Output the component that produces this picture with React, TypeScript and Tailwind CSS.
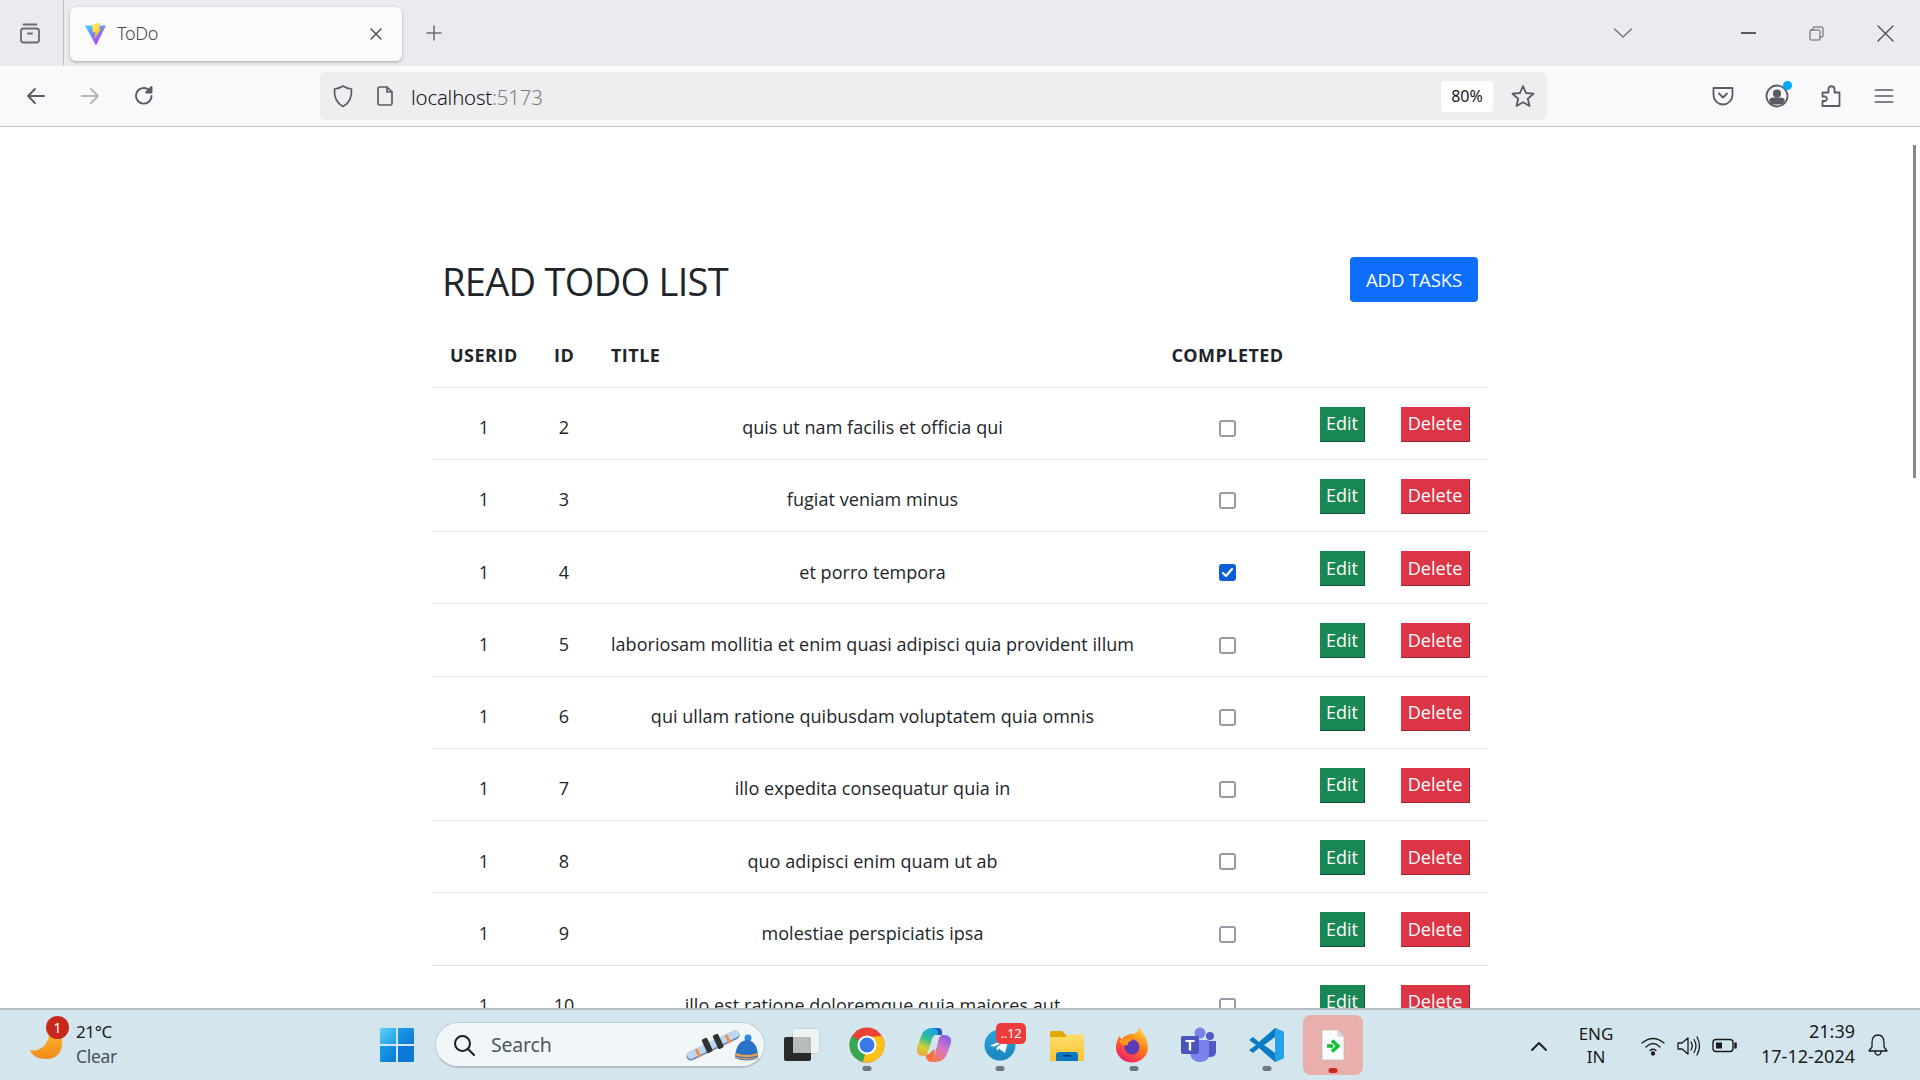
import React from "react";

const rows: [number, string, boolean][] = [
  [2, "quis ut nam facilis et officia qui", false],
  [3, "fugiat veniam minus", false],
  [4, "et porro tempora", true],
  [5, "laboriosam mollitia et enim quasi adipisci quia provident illum", false],
  [6, "qui ullam ratione quibusdam voluptatem quia omnis", false],
  [7, "illo expedita consequatur quia in", false],
  [8, "quo adipisci enim quam ut ab", false],
  [9, "molestiae perspiciatis ipsa", false],
  [10, "illo est ratione doloremque quia maiores aut", false],
];

const S = ({ children, w = 20, h = 20, vb = "0 0 20 20", c = "#5b5b66", sw = 1.7, className = "" }: any) => (
  <svg width={w} height={h} viewBox={vb} fill="none" stroke={c} strokeWidth={sw} strokeLinecap="round" strokeLinejoin="round" className={className}>
    {children}
  </svg>
);

const Vite = () => (
  <svg width="22" height="24" viewBox="0 0 22 24">
    <defs>
      <linearGradient id="v1" x1="0" y1="0" x2="0.7" y2="1"><stop offset="0" stopColor="#41d1ff" /><stop offset="1" stopColor="#bd34fe" /></linearGradient>
      <linearGradient id="v2" x1="0" y1="0" x2="0.4" y2="1"><stop offset="0" stopColor="#ffea83" /><stop offset="0.6" stopColor="#ffdd35" /><stop offset="1" stopColor="#ffa800" /></linearGradient>
    </defs>
    <path d="M0 3.5 L21 3.5 L11 23.5 Z" fill="url(#v1)" />
    <path d="M7 2.5 L15.5 0.5 L14 7 L16 6.7 L9.5 17 L10.5 10 L8 10.5 Z" fill="url(#v2)" />
  </svg>
);

const Win = () => (
  <svg width="36" height="36" viewBox="0 0 36 36">
    <defs>
      <linearGradient id="w1" x1="0" y1="0" x2="1" y2="1"><stop offset="0" stopColor="#5fd0f7" /><stop offset="1" stopColor="#1c9be6" /></linearGradient>
      <linearGradient id="w2" x1="0" y1="0" x2="1" y2="1"><stop offset="0" stopColor="#1c9ee8" /><stop offset="1" stopColor="#0a78d4" /></linearGradient>
    </defs>
    <path d="M1 2.5 Q1 1 2.5 1 H17 V17 H1 Z" fill="url(#w1)" />
    <path d="M19 1 H33.5 Q35 1 35 2.5 V17 H19 Z" fill="url(#w2)" />
    <path d="M1 19 H17 V35 H2.5 Q1 35 1 33.5 Z" fill="url(#w2)" />
    <path d="M19 19 H35 V33.5 Q35 35 33.5 35 H19 Z" fill="#0a78d4" />
  </svg>
);

const Chrome = () => (
  <svg width="36" height="36" viewBox="0 0 36 36">
    <circle cx="18" cy="18" r="17.5" fill="#ea4335" />
    <path d="M18 18 L3 9 A17.500 17.500 0 0 0 14 35 Z" fill="#34a853" />
    <path d="M18 18 L14 35 A17.500 17.500 0 0 0 33 9 L18 10 Z" fill="#fbc116" />
    <circle cx="18" cy="18" r="9.500" fill="#fff" />
    <circle cx="18" cy="18" r="7.500" fill="#3b78e7" />
  </svg>
);

const Copilot = () => (
  <svg width="36" height="36" viewBox="0 0 36 36">
    <defs>
      <linearGradient id="c1" x1="0.6" y1="0" x2="0.2" y2="1"><stop offset="0" stopColor="#14a3e8" /><stop offset="0.4" stopColor="#35c08e" /><stop offset="0.7" stopColor="#cdd23a" /><stop offset="1" stopColor="#f5a63e" /></linearGradient>
      <linearGradient id="c3" x1="0.7" y1="0" x2="0.3" y2="1"><stop offset="0" stopColor="#8a5fe0" /><stop offset="0.5" stopColor="#d876c8" /><stop offset="1" stopColor="#f5764a" /></linearGradient>
    </defs>
    <path d="M16 1 H22 Q26 1 25 5 L26 8 H20 Q17 8 16 12 L12 25 Q11 29 7 29 Q0 29 1 21 L4 12 Q7 1 16 1Z" fill="url(#c1)" />
    <path d="M18 1 H23 Q27 2 26 8 H21 Q24 4 18 1Z" fill="#2a55c8" />
    <path d="M26 8 H28 Q36 8 35 16 L32 24 Q29 35 20 35 H14 Q17 34 18 30 L22 15 Q23 9 26 8Z" fill="url(#c3)" />
    <path d="M10 28 Q14 27 16 24 L19 22 L18 30 Q17 34 14 35 Q9 32 10 28Z" fill="#f56f3a" />
  </svg>
);

const Telegram = () => (
  <svg width="32" height="32" viewBox="0 0 32 32">
    <defs><linearGradient id="tg" x1="0.5" y1="0" x2="0.5" y2="1"><stop offset="0" stopColor="#2aa5dd" /><stop offset="1" stopColor="#1a84bd" /></linearGradient></defs>
    <circle cx="16" cy="16" r="15.5" fill="url(#tg)" />
    <path d="M6 16.500 L25 9 L21 24 L15 19.500 L13 22 L12.500 18.500 L21 12 L10 17.800 Z" fill="#fff" />
  </svg>
);

const Folder = () => (
  <svg width="34" height="34" viewBox="0 0 34 34">
    <defs><linearGradient id="fo" x1="0" y1="0" x2="0" y2="1"><stop offset="0" stopColor="#ffdc6a" /><stop offset="1" stopColor="#fcc431" /></linearGradient></defs>
    <path d="M0 5 Q0 3 2 3 H12 L16 7 H34 V31 H0 Z" fill="#e0a800" />
    <path d="M0 9 H15 L18 6.500 H33 Q34 6.500 34 8 V33 H0 Z" fill="url(#fo)" />
    <path d="M6 33 V27 Q6 24 9 24 H25 Q28 24 28 27 V33 Z" fill="#0b78c4" />
    <rect x="13" y="27" width="8" height="1.500" fill="#063a70" />
  </svg>
);

const Firefox = () => (
  <svg width="34" height="36" viewBox="0 0 34 36">
    <defs>
      <linearGradient id="f1" x1="0.8" y1="0" x2="0.2" y2="1"><stop offset="0" stopColor="#ffdd3f" /><stop offset="0.45" stopColor="#ff7a1a" /><stop offset="1" stopColor="#f0146e" /></linearGradient>
    </defs>
    <path d="M24 0 C26 5 33 9 33 21 A16 15 0 1 1 1 20 C1 15 3 11 5 9 C5 11 6 12 7 12 C9 9 13 7 17 7 C21 7 24 4 24 0Z" fill="url(#f1)" />
    <circle cx="17" cy="20" r="7.500" fill="#5b3bb8" />
    <path d="M4 14 C9 10 15 11 18 13 C14 14 12 16 13 18 C8 19 6 17 4 14Z" fill="#ff9a1f" />
  </svg>
);

const Teams = () => (
  <svg width="36" height="36" viewBox="0 0 36 36">
    <circle cx="29" cy="9" r="4" fill="#5059c9" />
    <path d="M23 14 H35 V25 Q35 30 29 30 H23Z" fill="#5059c9" />
    <circle cx="19" cy="6" r="5.500" fill="#7b83eb" />
    <path d="M9 13 H28 V27 Q28 35 19 35 Q11 35 9 27Z" fill="#7b83eb" />
    <rect x="0" y="9" width="18" height="18" rx="2" fill="#4b53bc" />
    <path d="M4.500 13 H13.500 V15 H10.200 V23.500 H7.800 V15 H4.500Z" fill="#fff" />
  </svg>
);

const VSCode = () => (
  <svg width="36" height="36" viewBox="0 0 36 36">
    <path d="M26 1 L35 5 V31 L26 35 L10 21 L4 26 L0 23 L7 18 L0 13 L4 10 L10 15 Z M26 10 L15 18 L26 26 Z" fill="#0a7cc4" fillRule="evenodd" />
    <path d="M26 1 L35 5 V31 L26 35 Z" fill="#27a0ea" />
  </svg>
);

const FileApp = () => (
  <svg width="24" height="32" viewBox="0 0 24 32">
    <path d="M1 1 H17 L23 7 V31 H1Z" fill="#fbfbfb" stroke="#b9b9b9" strokeWidth="0.7" />
    <path d="M17 1 V7 H23Z" fill="#e0e0e0" stroke="#b9b9b9" strokeWidth="0.7" />
    <path d="M6 17 H12 M11 11.500 L17 17 L11 22.500" stroke="#10c030" strokeWidth="3.400" fill="none" />
  </svg>
);

const Sys = ({ text, className = "" }: { text: string; className?: string }) => (
  <span className={className}>{text}</span>
);

const Dot = () => <div className="absolute bottom-[3px] left-1/2 -translate-x-1/2 w-[9px] h-[5px] rounded-full bg-[#71787c]" />;

const TaskIcon = ({ children, dot }: any) => (
  <div className="relative w-[66.6px] h-[58px] flex items-center justify-center">
    {children}
    {dot && <Dot />}
  </div>
);

export default function App() {
  return (
    <div className="w-[1920px] h-[1080px] flex flex-col overflow-hidden bg-white text-[#212529] font-['Open_Sans','Noto_Sans',sans-serif]">
      {/* tab strip */}
      <div className="h-[66px] shrink-0 bg-[#ebebef] flex items-center relative">
        <div className="w-[64px] h-full border-r border-[#c4c4c9] flex items-center justify-center pr-[3px]">
          <S w={24} h={24} vb="0 0 24 24" c="#6b6b73" sw={1.8}>
            <rect x="3" y="7.500" width="18" height="14" rx="2.500" />
            <path d="M5.500 3.500 H18.500" />
            <path d="M10 12.500 H14" />
          </S>
        </div>
        <div className="ml-[6px] mt-[1px] w-[332px] h-[54px] rounded-[6px] bg-[#fbfbfc] shadow-[0_1px_3px_rgba(0,0,0,0.3)] flex items-center pl-[15px] pr-[19px]">
          <Vite />
          <span className="ml-[10px] text-[18px] text-[#45454d] font-['Noto_Sans',sans-serif] font-light tracking-[-0.3px]">ToDo</span>
          <div className="ml-auto">
            <S w={14} h={14} vb="0 0 14 14" c="#45454d" sw={1.4}><path d="M2 2 L12 12 M12 2 L2 12" /></S>
          </div>
        </div>
        <div className="ml-[23px]">
          <S w={18} h={18} vb="0 0 18 18" c="#6f6f78" sw={1.6}><path d="M9 2 V16 M2 9 H16" /></S>
        </div>
        <div className="ml-auto flex items-center">
          <S w={20} h={12} vb="0 0 20 12" c="#707078" sw={1.3} className="mr-[108px]"><path d="M1.500 2 L10 10 L18.500 2" /></S>
          <div className="w-[15px] h-[1.500px] bg-[#5a5a60] mr-[53px]" />
          <S w={15} h={15} vb="0 0 15 15" c="#5a5a60" sw={1} className="mr-[53px]"><rect x="1" y="4" width="10" height="10" rx="1" /><path d="M4 4 V2 Q4 1 5 1 H13 Q14 1 14 2 V10 Q14 11 13 11 H11" /></S>
          <S w={17} h={17} vb="0 0 17 17" c="#45454d" sw={1.2} className="mr-[26px]"><path d="M1 1 L16 16 M16 1 L1 16" /></S>
        </div>
      </div>

      {/* toolbar */}
      <div className="h-[61px] shrink-0 bg-[#f9f9fb] border-b-[1px] border-[#c6c6c9] flex items-center relative">
        <div className="w-[320px] flex items-center pl-[25px]">
          <S w={22} h={22} vb="0 0 22 22" c="#5b5b66" sw={1.9}><path d="M19 11 H3 M10 4 L3 11 L10 18" /></S>
          <S w={22} h={22} vb="0 0 22 22" c="#b4b4b9" sw={1.9} className="ml-[32px]"><path d="M3 11 H19 M12 4 L19 11 L12 18" /></S>
          <S w={22} h={22} vb="0 0 22 22" c="#5b5b66" sw={1.9} className="ml-[32px]"><path d="M18.500 11 A7.800 7.800 0 1 1 15 4.300" /><path d="M18.500 2 V7.500 H13 Z" fill="#5b5b66" /></S>
        </div>
        <div className="w-[1227px] h-[48px] rounded-[6px] bg-[#eeeef0] flex items-center">
          <S w={22} h={24} vb="0 0 22 24" c="#5b5b66" sw={1.7} className="ml-[12px]"><path d="M11 2 C8 4 5 5 2.500 5 C2 13 4 19 11 22.500 C18 19 20 13 19.500 5 C17 5 14 4 11 2Z" /></S>
          <S w={18} h={22} vb="0 0 18 22" c="#5b5b66" sw={1.7} className="ml-[22px]"><path d="M2 3.500 Q2 2 3.500 2 H11 L16 7 V18.500 Q16 20 14.500 20 H3.500 Q2 20 2 18.500 Z" /><path d="M11 2 V7 H16" /></S>
          <span className="ml-[17px] mt-[2px] text-[20.4px] tracking-[-0.2px] font-['Noto_Sans',sans-serif] font-light text-[#15141a]">localhost<span className="text-[#7b7b83]">:5173</span></span>
          <div className="ml-auto mr-[-1px] w-[52px] h-[31px] rounded-[4px] bg-white flex items-center justify-center text-[16px] font-['Noto_Sans',sans-serif] text-[#15141a]">80%</div>
          <S w={26} h={26} vb="0 0 26 26" c="#5b5b66" sw={1.8} className="ml-[18px] mr-[11px]"><path d="M13 3 L16 10 L23.500 10.700 L17.800 15.700 L19.500 23 L13 19.200 L6.500 23 L8.200 15.700 L2.500 10.700 L10 10Z" /></S>
        </div>
        <div className="ml-auto flex items-center pr-[26px]">
          <S w={24} h={22} vb="0 0 24 22" c="#5b5b66" sw={1.8}><path d="M2.500 3 H21.500 V10 A9.500 9.500 0 0 1 2.500 10Z" /><path d="M8 8.500 L12 12.500 L16 8.500" /></S>
          <div className="relative ml-[30px] w-[24px] h-[24px]">
            <S w={24} h={24} vb="0 0 24 24" c="#5b5b66" sw={1.8}><circle cx="12" cy="12" r="10.500" /><circle cx="12" cy="9.500" r="3.200" fill="#5b5b66" /><path d="M5 16 Q6 14.500 8 14.500 H16 Q18 14.500 19 16 L17 19.500 H7 Z" fill="#5b5b66" /></S>
            <div className="absolute -top-[3px] -right-[3px] w-[9px] h-[9px] rounded-full bg-[#00a8ff]" />
          </div>
          <S w={22} h={24} vb="0 0 22 24" c="#5b5b66" sw={1.8} className="ml-[31px]"><path d="M7.500 22 H19.500 V8.500 H14.500 V5.500 A3 3 0 0 0 8.500 5 V8.500 H2.500 V12.500 H5.500 A2.500 2.500 0 0 1 5.500 17 H2.500 V22 Z" /></S>
          <S w={20} h={18} vb="0 0 20 18" c="#5b5b66" sw={1.7} className="ml-[32px]"><path d="M1.500 3 H18.500 M1.500 9 H18.500 M1.500 15 H18.500" /></S>
        </div>
      </div>

      {/* page */}
      <div className="flex-1 min-h-0 relative overflow-hidden">
        <div className="w-[1056px] ml-[432px] pt-[131px]">
          <div className="h-[46px] pl-[10px] pr-[10px] flex items-start justify-between">
            <h1 className="text-[38px] leading-[46px] font-['Open_Sans',sans-serif] text-[#212529] tracking-[-0.7px]">READ TODO LIST</h1>
            <button className="-mt-[1px] w-[128px] h-[45px] rounded-[4px] bg-[#0d6efd] text-white text-[18.5px] tracking-[-0.1px]">ADD TASKS</button>
          </div>
          <table className="mt-[11px] w-[1056px] table-fixed border-collapse text-[18px] tracking-[0.05px]">
            <colgroup>
              <col className="w-[104px]" />
              <col className="w-[56px]" />
              <col className="w-[561px]" />
              <col className="w-[149px]" />
              <col className="w-[81px]" />
              <col className="w-[105px]" />
            </colgroup>
            <thead>
              <tr className="h-[72px] border-b border-[#dee2e6] font-bold text-left">
                <th className="pl-[18px] pt-[10px] tracking-[0.5px]">USERID</th>
                <th className="pl-[18px] pt-[10px] tracking-[0.45px]">ID</th>
                <th className="pl-[19px] pt-[10px] tracking-[0.45px]">TITLE</th>
                <th className="text-center pt-[10px] tracking-[0.45px]">COMPLETED</th>
                <th />
                <th />
              </tr>
            </thead>
            <tbody>
              {rows.map(([id, title, done]) => (
                <tr key={id} className="h-[72.25px] border-b border-[#dee2e6] text-center">
                  <td className="pt-[9px]">1</td>
                  <td className="pt-[9px]">{id}</td>
                  <td className="pt-[9px] whitespace-nowrap">{title}</td>
                  <td className="pt-[7px]">
                    <span className={`inline-flex align-middle items-center justify-center w-[17px] h-[17px] rounded-[3px] border-2 ${done ? "bg-[#0b5ed7] border-[#0b5ed7]" : "bg-white border-[#9a9aa5]"}`}>
                      {done && <S w={13} h={13} vb="0 0 13 13" c="#fff" sw={2.2}><path d="M2 7 L5 10 L11 3" /></S>}
                    </span>
                  </td>
                  <td className="pt-[8px]">
                    <button className="block mx-auto -mt-[6px] w-[45px] h-[35px] bg-[#198754] text-white border-r border-b border-[#0f5535] text-[18px]">Edit</button>
                  </td>
                  <td className="pt-[8px]">
                    <button className="block ml-[18px] -mt-[6px] w-[69px] h-[35px] bg-[#dc3545] text-white border-r border-b border-[#9c2230] text-[18px]">Delete</button>
                  </td>
                </tr>
              ))}
            </tbody>
          </table>
        </div>
        {/* scrollbar */}
        <div className="absolute right-[4px] top-[18px] w-[3px] h-[333px] bg-[#888888]" />
      </div>

      {/* taskbar */}
      <div className="h-[72px] shrink-0 bg-[#d3e6ed] border-t-[2px] border-[#b5bdc1] flex items-center relative text-[#1b1b1b] font-['Noto_Sans',sans-serif]">
        <div className="w-[130px] relative h-full">
          <svg width="36" height="32" viewBox="0 0 36 32" className="absolute left-[29px] top-[24px]">
            <defs><linearGradient id="moon" x1="0" y1="0" x2="0" y2="1"><stop offset="0" stopColor="#fbb02a" /><stop offset="1" stopColor="#f08a1a" /></linearGradient></defs>
            <path d="M1 16 C8 18 18 14 20 1 L32 1 C36 14 30 25 18 25 C9 25 3 22 1 16Z" fill="url(#moon)" />
          </svg>
          <div className="absolute left-[46px] top-[6px] w-[23px] h-[23px] rounded-full bg-[#c8281c] text-white text-[14px] leading-[23px] text-center">1</div>
          <div className="absolute left-[76px] top-[11px] text-[17px] leading-[22px] tracking-[-0.4px]">21°C</div>
          <div className="absolute left-[76px] top-[35px] text-[17.500px] leading-[22px] text-[#4d5356] tracking-[-0.3px]">Clear</div>
        </div>
        <div className="ml-[249px]"><Win /></div>
        <div className="ml-[20px] w-[330px] h-[46px] rounded-full bg-[#f1f6f9] border border-[#c0d0d7] border-b-[2px] border-b-[#b3c0c6] flex items-center relative">
          <S w={24} h={24} vb="0 0 24 24" c="#1d1d1d" sw={2} className="ml-[16px]"><circle cx="10.500" cy="10.500" r="7.500" /><path d="M16 16 L22 22" /></S>
          <span className="ml-[15px] text-[19.500px] text-[#50565a] tracking-[-0.2px]">Search</span>
          <svg width="78" height="34" viewBox="0 0 78 34" className="absolute right-[4px] top-[7px]">
            <line x1="9" y1="26" x2="53" y2="5" stroke="#5b7fa8" strokeWidth="9" strokeLinecap="round" />
            <line x1="9" y1="25" x2="53" y2="4" stroke="#bcd6f2" strokeWidth="8" strokeLinecap="round" />
            <line x1="14" y1="19" x2="18" y2="27" stroke="#ef8f4e" strokeWidth="3" />
            <line x1="44" y1="5" x2="48" y2="13" stroke="#ef8f4e" strokeWidth="3" />
            <rect x="22" y="8" width="6" height="15" rx="1.500" fill="#333" transform="rotate(-25 25 15)" />
            <rect x="33" y="4" width="6" height="15" rx="1.500" fill="#333" transform="rotate(-25 36 11)" />
            <circle cx="66" cy="8" r="3.500" fill="#2e8be0" />
            <path d="M53 28 Q54 10 66 10 Q76 12 76 28 Q65 33 53 28Z" fill="#2a72c8" />
            <path d="M53.500 23 Q65 27 75.500 23 L75.800 25.500 Q65 29 53.300 25.500Z" fill="#efa04e" />
            <path d="M53 27 Q65 31 76 27" stroke="#efa04e" strokeWidth="1.300" fill="none" />
          </svg>
        </div>
        <div className="ml-[19px] w-[35px] h-[32px] relative">
          <div className="absolute left-0 bottom-0 w-[27px] h-[24px] bg-[#2a2a2a] rounded-[2px]" />
          <div className="absolute right-0 top-0 w-[26px] h-[24px] rounded-[2px] bg-[#f2f4f4]/90 shadow-[0_0_2px_rgba(0,0,0,0.25)]" />
          <div className="absolute left-[9px] top-[8px] w-[18px] h-[16px] bg-[#b8bbbc]" />
        </div>
        <div className="ml-[15px] flex items-center">
          <TaskIcon dot><Chrome /></TaskIcon>
          <TaskIcon><Copilot /></TaskIcon>
          <TaskIcon dot>
            <Telegram />
            <div className="absolute left-[29px] top-[7px] w-[30px] h-[21px] rounded-[5px] bg-[#ee3b3b] text-white text-[13px] leading-[21px] text-center tracking-[-0.3px]">..12</div>
          </TaskIcon>
          <TaskIcon><Folder /></TaskIcon>
          <TaskIcon dot><div className="-ml-[3px]"><Firefox /></div></TaskIcon>
          <TaskIcon><div className="-ml-[2px]"><Teams /></div></TaskIcon>
          <TaskIcon dot><VSCode /></TaskIcon>
          <div className="relative w-[60px] h-[60px] rounded-[8px] bg-[#e8afac] ml-[3px] flex items-center justify-center">
            <FileApp />
            <div className="absolute bottom-[2px] left-1/2 -translate-x-1/2 w-[9px] h-[5px] rounded-full bg-[#c8281c]" />
          </div>
        </div>
        <div className="absolute left-[1530px] top-0 h-full w-[390px]">
          <S w={18} h={12} vb="0 0 18 12" c="#1b1b1b" sw={1.800} className="absolute left-[0px] top-[30px]"><path d="M2 10 L9 3 L16 10" /></S>
          <div className="absolute left-[41px] top-[12px] w-[50px] text-center text-[17px] leading-[23px] text-[#1b1b1b]"><Sys text="ENG" /><br /><Sys text="IN" /></div>
          <S w={26} h={20} vb="0 0 26 20" c="#1b1b1b" sw={1.300} className="absolute left-[110px] top-[26px]"><path d="M2 7 Q13 -2 24 7 M6 11 Q13 4 20 11 M10 14.500 Q13 12 16 14.500" /><circle cx="13" cy="17.500" r="1.500" fill="#1b1b1b" /></S>
          <S w={26} h={22} vb="0 0 26 22" c="#1b1b1b" sw={1.300} className="absolute left-[146px] top-[25px]"><path d="M2 8 H6 L12 3 V19 L6 14 H2Z" /><path d="M15 7 Q17.500 11 15 15 M18 4.500 Q22 11 18 17.500 M21 2 Q26 11 21 20" /></S>
          <S w={26} h={16} vb="0 0 26 16" c="#1b1b1b" sw={1.400} className="absolute left-[182px] top-[28px]"><rect x="1" y="1.500" width="20" height="12" rx="3" /><rect x="4" y="4.500" width="6" height="6" fill="#1b1b1b" stroke="none" /><path d="M23.500 5.500 V9.500" strokeWidth="2.500" /></S>
          <div className="absolute right-[65px] top-[9px] text-right text-[18px] leading-[24.5px] whitespace-nowrap text-[#1b1b1b]">21:39<br />17-12-2024</div>
          <S w={22} h={24} vb="0 0 22 24" c="#1b1b1b" sw={1.300} className="absolute right-[31px] top-[23px]"><path d="M11 2 C6 2 5 6 5 10 V14 L2 18 H20 L17 14 V10 C17 6 16 2 11 2Z" /><path d="M8 18 Q8 22 11 22 Q14 22 14 18" /></S>
        </div>
      </div>
    </div>
  );
}
